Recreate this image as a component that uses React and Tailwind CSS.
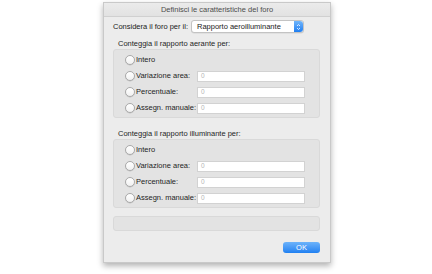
import React from "react";

const FONT = { fontFamily: '"Liberation Sans", Arial, sans-serif' };

function Radio({ label }) {
  return (
    <div className="flex items-center h-[16px]">
      <span className="w-[10px] h-[10px] rounded-full border border-[#a9a9a9] bg-gradient-to-b from-white to-[#f1f1f1] shadow-[0_0.5px_0.5px_rgba(0,0,0,0.15)]" />
      <span className="ml-[1px] text-[7.5px] text-[#1e1e1e]">{label}</span>
    </div>
  );
}

function FieldRow({ label }) {
  return (
    <div className="flex items-center h-[16px]">
      <div className="w-[72px]">
        <Radio label={label} />
      </div>
      <div className="w-[108px] h-[11px] bg-white border border-[#d2d2d2] flex items-center pl-[3px] text-[6.5px] text-[#b5b5b5]">
        0
      </div>
    </div>
  );
}

function CountGroup({ title, className }) {
  return (
    <div className={className}>
      <div className="pl-[5px] h-[11px] flex items-center text-[7.5px] text-[#1e1e1e]">{title}</div>
      <div className="w-[207px] rounded-[3px] border border-[#d9d9d9] bg-[#e3e3e3] pl-[11px] pt-[2px] pb-[1px]">
        <Radio label="Intero" />
        <FieldRow label="Variazione area:" />
        <FieldRow label="Percentuale:" />
        <FieldRow label="Assegn. manuale:" />
      </div>
    </div>
  );
}

function Stepper() {
  return (
    <div className="w-[9px] h-full rounded-r-[3px] bg-gradient-to-b from-[#6fb5fb] to-[#1c7ef1] flex items-center justify-center">
      <svg width="5" height="8" viewBox="0 0 5 8">
        <path d="M1 3 L2.5 1.5 L4 3" stroke="white" strokeWidth="0.8" fill="none" />
        <path d="M1 5 L2.5 6.5 L4 5" stroke="white" strokeWidth="0.8" fill="none" />
      </svg>
    </div>
  );
}

export default function App() {
  return (
    <div className="w-[432px] h-[274px] bg-white overflow-hidden" style={FONT}>
      <div className="ml-[103px] mt-[2px] w-[228px] h-[261px] bg-[#ececec] border border-[#c9c9c9] shadow-[0_3px_6px_rgba(0,0,0,0.3)] flex flex-col">
        <div className="h-[14px] bg-gradient-to-b from-[#ebebeb] to-[#e2e2e2] border-b border-[#d0d0d0] flex items-center justify-center text-[7.5px] text-[#4d4d4d]">
          Definisci le caratteristiche del foro
        </div>
        <div className="pl-[9px] pt-[3px] flex flex-col">
          <div className="flex items-center h-[13px]">
            <span className="w-[78px] text-[7.5px] text-[#1a1a1a]">Considera il foro per il:</span>
            <div className="w-[113px] h-[13px] bg-white border border-[#c3c3c3] rounded-[3px] flex items-stretch shadow-[0_0.5px_0.5px_rgba(0,0,0,0.1)]">
              <span className="flex-1 pl-[5px] flex items-center text-[7.5px] text-[#1a1a1a]">Rapporto aeroilluminante</span>
              <Stepper />
            </div>
          </div>
          <CountGroup className="mt-[5px]" title="Conteggia il rapporto aerante per:" />
          <CountGroup className="mt-[10px]" title="Conteggia il rapporto illuminante per:" />
          <div className="mt-[8px] w-[207px] h-[15px] rounded-[3px] border border-[#d9d9d9] bg-[#e3e3e3]" />
          <div className="mt-[11px] w-[207px] flex justify-end">
            <div className="w-[37px] h-[11px] rounded-[3px] bg-gradient-to-b from-[#6cb3fa] to-[#1e80f1] flex items-center justify-center text-[7.5px] text-white">
              OK
            </div>
          </div>
        </div>
      </div>
    </div>
  );
}
